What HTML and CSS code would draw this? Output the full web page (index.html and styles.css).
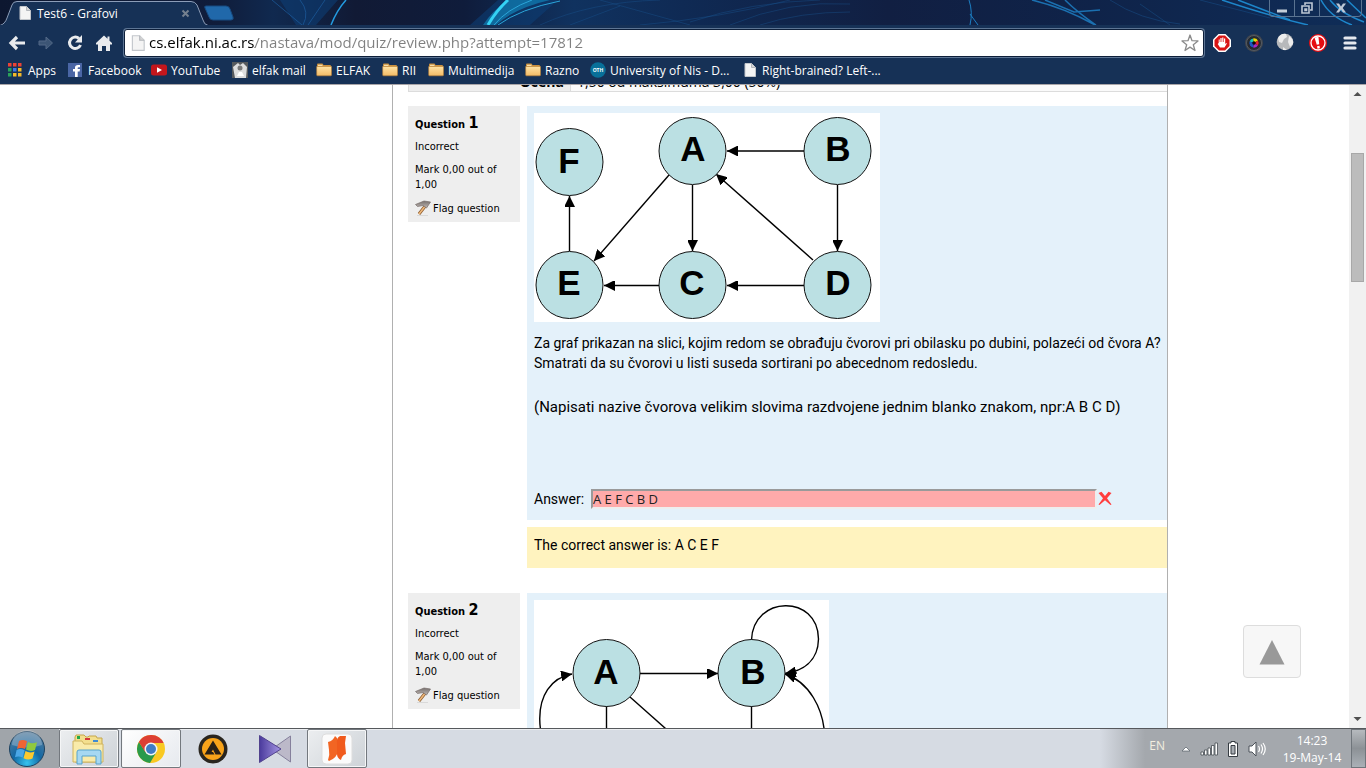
FILE: index.html
```html
<!DOCTYPE html>
<html lang="en">
<head>
<meta charset="utf-8">
<title>Test6 - Grafovi</title>
<link rel="stylesheet" href="styles.css">
</head>
<body>
<svg class="defs" width="0" height="0" aria-hidden="true">
  <defs>
    <marker id="arrow" viewBox="0 0 11 10" refX="11" refY="5" markerWidth="11" markerHeight="10" markerUnits="userSpaceOnUse" orient="auto"><path d="M0 -.5L11 5L0 10.500Z"/></marker>
    <linearGradient id="folderFill" x1="0" y1="0" x2="0" y2="1"><stop offset="0" stop-color="#ffe3a4"/><stop offset="1" stop-color="#f3bb66"/></linearGradient>
    <symbol id="folder" viewBox="0 0 16 16"><path d="M1 2.500q0-1 1-1h4.500l1 1.500H14q1 0 1 1V13H1z" fill="#c98f3d"/><path d="M.7 4.500h14.800V13q0 .8-.8.8H1.500Q.7 13.800 .7 13z" fill="url(#folderFill)" stroke="#b97f35" stroke-width=".6"/><path d="M2 3.300h4.500" stroke="#fff1c8"/></symbol>
    <symbol id="page" viewBox="0 0 16 16"><path d="M3 1.500h6.500l4 4V14.500H3z" fill="#f4f4f4" stroke="#c2c6cb"/><path d="M9.500 1.500v4h4" fill="#d5d5d5" stroke="#b3b7bc"/></symbol>
    <linearGradient id="flagHead" x1="0" y1="0" x2="0" y2="1"><stop offset="0" stop-color="#77706e"/><stop offset="1" stop-color="#c0b8b4"/></linearGradient>
    <symbol id="flag" viewBox="0 0 16 16"><path d="M2 15.500h11" stroke="#d9d9d9"/><path d="M11 5L4 14" stroke="#8b5a2b" stroke-width="3"/><path d="M11 5L4 14" stroke="#eeb87c" stroke-width="1.600"/><path d="M.5 4.500L9 1l6.500 1-4 6-3.500-2.500L2.500 6.500z" fill="url(#flagHead)" stroke="#776d6a" stroke-width=".7"/></symbol>
  </defs>
</svg>

<header class="browser">
  <div class="titlebar">
    <svg class="wallpaper" viewBox="0 0 1366 25" preserveAspectRatio="xMinYMin slice" aria-hidden="true">
      <defs><linearGradient id="sky" x1="0" x2="1"><stop offset="0" stop-color="#0d1730"/><stop offset=".16" stop-color="#101d3b"/><stop offset=".2" stop-color="#10294f"/><stop offset=".26" stop-color="#111a35"/><stop offset=".34" stop-color="#0f1c3b"/><stop offset=".42" stop-color="#10325f"/><stop offset=".5" stop-color="#0f2a54"/><stop offset=".65" stop-color="#111f42"/><stop offset=".8" stop-color="#0f2349"/><stop offset="1" stop-color="#0f2d58"/></linearGradient></defs>
      <rect width="1366" height="25" fill="url(#sky)"/>
      <path d="M470 25L498 0h60L530 25zM280 0l16 25h20L338 0z" fill="#0d4078" opacity=".55"/>
      <path d="M483 25Q492 11 508 0h42Q515 8 496 25z" fill="#1187bd" opacity=".65"/>
      <g fill="none">
        <path d="M488 25Q496 11 508 0" stroke="#35d2f5" stroke-width="3"/>
        <path d="M494 25Q507 9 532 0M498 25Q520 9 560 1" stroke="#2ba5d9"/>
        <path d="M331 25Q337 10 346 0" stroke="#239be0" stroke-width="1.500"/>
        <path d="M272 0L302 25M300 0Q310 12 303 25M325 0L308 25" stroke="#1d5d9e" opacity=".7"/>
        <path d="M540 25Q590 2 660 0M570 25L620 6M690 22Q750 2 820 0M730 25Q790 0 850 4M760 25Q800 12 850 12M640 25Q720 18 790 0M600 0L690 25" stroke="#1a5590" opacity=".4"/>
        <path d="M969 0Q973 12 970 25M970 14L978 25" stroke="#1c7fc4"/>
        <path d="M1032 0Q1065 8 1095 25M1065 0Q1077 12 1096 25M1045 0L1074 12L1100 10" stroke="#1b70b0" stroke-width="1.500"/>
        <path d="M1110 0Q1140 20 1180 24M1140 4L1170 25M1200 0L1270 18" stroke="#17508a" opacity=".5"/>
        <path d="M1222 0Q1270 16 1308 25M1238 0L1290 20M1321 0Q1330 17 1352 25M1330 0Q1340 13 1364 22M1347 0L1366 18" stroke="#1d86ca" stroke-width="1.500"/>
      </g>
    </svg>
    <div class="tab">
      <svg class="tab-shape" width="208" height="25" viewBox="0 0 208 25" aria-hidden="true"><path d="M0 25.500Q5 24 7 18L12 5Q13 1.500 17 1.500H191Q195 1.500 197 5L203 20Q204 24.500 208 25.500z" fill="#163156" stroke="#8c9db8"/></svg>
      <svg class="tab-icon" width="16" height="16" aria-hidden="true"><use href="#page"/></svg>
      <span class="tab-title">Test6 - Grafovi</span>
      <button class="tab-close" aria-label="Close tab"><svg width="9" height="9" viewBox="0 0 9 9"><path d="M1.500 1.500l6 6m0-6l-6 6" stroke="#74808f" stroke-width="2"/></svg></button>
    </div>
    <button class="new-tab" aria-label="New tab"><svg width="32" height="16" viewBox="0 0 32 16"><path d="M3 1h20q3 0 4 3l3 8q1 3-2 3H10q-3 0-4-3L2 3q-1-2 1-2z" fill="#2068aa" stroke="#174a80"/></svg></button>
    <div class="window-buttons">
      <button aria-label="Minimize"><svg width="12" height="12" viewBox="0 0 12 12"><path d="M1 7.500h10v3H1z" fill="#c5ced9"/></svg></button>
      <button aria-label="Restore"><svg width="12" height="12" viewBox="0 0 12 12"><path d="M4 3V1h7v7H9M1 4h7v7H1zM4 7h1.500v1.500H4z" fill="none" stroke="#bdc7d4" stroke-width="1.600"/></svg></button>
      <button aria-label="Close" class="close"><svg width="12" height="12" viewBox="0 0 12 12"><path d="M1 1.500h3l2 3 2-3h3L7.700 6l3.300 4.500H8L6 7.500l-2 3H1L4.300 6z" fill="#bdc8d6"/></svg></button>
    </div>
  </div>

  <div class="toolbar">
    <button aria-label="Back"><svg width="18" height="18" viewBox="0 0 18 18"><path d="M9 3L3 9l6 6M3 9h14" fill="none" stroke="#e9ebee" stroke-width="3.200"/></svg></button>
    <button aria-label="Forward"><svg width="18" height="18" viewBox="0 0 18 18"><path d="M9 3l6.500 6L9 15v-4H2V7h7z" fill="#3c5575" stroke="#526987"/></svg></button>
    <button aria-label="Reload"><svg width="18" height="18" viewBox="0 0 18 18"><path d="M13 4.500A5.700 5.700 0 1 0 14.500 11" fill="none" stroke="#e9ebee" stroke-width="3"/><path d="M16 1v7.500H9z" fill="#e9ebee"/></svg></button>
    <button aria-label="Home"><svg width="18" height="18" viewBox="0 0 18 18"><path d="M9 1.500l3.500 3.300V2.500h2v4.200L17 9v1.500h-2V17h-4v-5H7v5H3v-6.500H1V9z" fill="#e9ebee"/></svg></button>
    <div class="omnibox">
      <svg width="18" height="18" aria-hidden="true"><use href="#page"/></svg>
      <input class="url" aria-label="Address" value="cs.elfak.ni.ac.rs/nastava/mod/quiz/review.php?attempt=17812">
      <button aria-label="Bookmark this page"><svg width="18" height="18" viewBox="0 0 18 18"><path d="M9 1l2 5.700 6 .2-4.700 3.800L14 16.500 9 13.100 4 16.500l1.700-5.800L1 6.900l6-.2z" fill="#fff" stroke="#8b8b8b" stroke-width="1.300" stroke-linejoin="round"/></svg></button>
    </div>
    <div class="extensions">
      <button aria-label="AdBlock"><svg width="20" height="20" viewBox="0 0 20 20"><path d="M6.500 1h7L19 6.500v7L13.500 19h-7L1 13.500v-7z" fill="#fff"/><path d="M7 2.500h6L17.500 7v6L13 17.500H7L2.500 13V7z" fill="#d91414"/><path d="M6.700 10V6.500h1V9h.7V5h1.200v4h.6V4.500h1.200V9h.6V5.500h1.200V11l1-1 .7.500-2.400 4H8L5.700 11z" fill="#fff"/></svg></button>
      <button aria-label="Screen capture"><svg width="20" height="20" viewBox="0 0 20 20"><circle cx="10" cy="10" r="9" fill="#3f454d"/><circle cx="10" cy="10" r="7.500" fill="#252a31" stroke="#555b63"/><circle cx="10" cy="10" r="4.700" fill="#111"/><path d="M10 10L5.500 8.500A4.700 4.700 0 0 1 9 5.400z" fill="#16c6c0"/><path d="M10 10L9 5.400A4.700 4.700 0 0 1 14 7.500z" fill="#e8d80d"/><path d="M10 10l4-2.500a4.700 4.700 0 0 1 0 5z" fill="#e2222e"/><path d="M10 10l4 2.500a4.700 4.700 0 0 1-5 2z" fill="#a629c6"/><path d="M10 10l-4.500-1.500a4.700 4.700 0 0 0 3.500 6z" fill="#1b55c4"/><circle cx="10" cy="10" r="1.800" fill="#0a0a0a"/></svg></button>
      <button aria-label="Globe"><svg width="20" height="20" viewBox="0 0 20 20"><circle cx="9" cy="9" r="8.300" fill="#b7b9bb"/><path d="M2 5Q5 0 10 1l1 3-3 2-2 4-3-1zM13 3q5 3 4 8l-3 3-2-5zM7 14l4 3H7z" fill="#ececec"/></svg></button>
      <button aria-label="Alerts"><svg width="20" height="20" viewBox="0 0 20 20"><circle cx="10" cy="10" r="9" fill="#e60d12"/><circle cx="10" cy="10" r="7" fill="none" stroke="#fff" stroke-width="1.300"/><path d="M7.500 4h4L11 11.500H8.500zM8.500 13H11v2.500H8.500z" fill="#fff" transform="rotate(-10 10 10)"/></svg></button>
      <button aria-label="Menu"><svg width="20" height="20" viewBox="0 0 20 20"><path d="M5 5h10M5 10h10M5 15h10" stroke="#e6e9ee" stroke-width="3.200" stroke-linecap="round"/></svg></button>
    </div>
  </div>

  <nav class="bookmarks" aria-label="Bookmarks">
    <a href="#"><svg width="16" height="16" viewBox="0 0 16 16"><path d="M0 1h3.500v3.500H0zM5 1h3.500v3.500H5zM10 1h3.500v3.500H10z" fill="#ea4335"/><path d="M0 6h3.500v3.500H0zM0 11h3.500v3.500H0z" fill="#2aa35a"/><path d="M5 6h3.500v3.500H5z" fill="#3b78e7"/><path d="M10 6h3.500v3.500H10zM5 11h3.500v3.500H5zM10 11h3.500v3.500H10z" fill="#f4b928"/></svg><span>Apps</span></a>
    <a href="#"><svg width="16" height="16" viewBox="0 0 16 16"><path d="M0 1h14v14H0z" fill="#4a66a5"/><path d="M7 15V9.500H5V7h2V5.500Q7 3 10 3h2v2.300h-1.500q-.8 0-.8.8V7H12l-.4 2.500H9.700V15z" fill="#fff"/></svg><span>Facebook</span></a>
    <a href="#"><svg width="16" height="16" viewBox="0 0 16 16"><rect y="2.500" width="16" height="11" rx="2.500" fill="#c4161c"/><path d="M6 5.300l5 2.700-5 2.700z" fill="#fff"/></svg><span>YouTube</span></a>
    <a href="#"><svg width="16" height="16" viewBox="0 0 16 16"><path d="M0 0h16v16H0z" fill="#56595c"/><path d="M1 5l5-4 2 2 3-2 4 4-1 11H3z" fill="#ddd"/><circle cx="8" cy="6" r="2.500" fill="#777"/><path d="M5 14l2-4h3l2 4z" fill="#fff"/></svg><span>elfak mail</span></a>
    <a href="#"><svg width="16" height="16"><use href="#folder"/></svg><span>ELFAK</span></a>
    <a href="#"><svg width="16" height="16"><use href="#folder"/></svg><span>RII</span></a>
    <a href="#"><svg width="16" height="16"><use href="#folder"/></svg><span>Multimedija</span></a>
    <a href="#"><svg width="16" height="16"><use href="#folder"/></svg><span>Razno</span></a>
    <a href="#"><svg width="16" height="16" viewBox="0 0 16 16"><circle cx="8" cy="8" r="7.800" fill="#087099"/><text x="8" y="10" class="oth">OTH</text></svg><span>University of Nis - D...</span></a>
    <a href="#"><svg width="16" height="16"><use href="#page"/></svg><span>Right-brained? Left-...</span></a>
  </nav>
</header>

<div class="viewport">
  <main class="page">
    <div class="sheet">
      <table class="summary">
        <tr><th scope="row">Ocena</th><td>1,50 od maksimuma 3,00 (50%)</td></tr>
      </table>

      <section class="question">
        <aside class="info">
          <h2>Question <b>1</b></h2>
          <p>Incorrect</p>
          <p>Mark 0,00 out of 1,00</p>
          <a class="flag" href="#"><svg width="16" height="16"><use href="#flag"/></svg>Flag question</a>
        </aside>
        <div class="body">
          <div class="formulation">
            <svg class="graph" width="346" height="209" viewBox="0 0 346 209" role="img" aria-label="Directed graph">
              <g class="edges">
                <path d="M270 38H193"/><path d="M303.500 72V138"/><path d="M158.500 72V138"/><path d="M135 62L60 148"/><path d="M279 147L182 61"/><path d="M35.500 138V83"/><path d="M125 172.500H70"/><path d="M270 172.500H193"/>
              </g>
              <g class="nodes">
                <circle cx="35.500" cy="49" r="33.500"/><circle cx="158.500" cy="38" r="33.500"/><circle cx="303.500" cy="38" r="33.500"/><circle cx="35.500" cy="172" r="33.500"/><circle cx="158.500" cy="172" r="33.500"/><circle cx="303.500" cy="172" r="33.500"/>
              </g>
              <g class="letters">
                <text x="35" y="60">F</text><text x="159" y="48">A</text><text x="304" y="48">B</text><text x="35" y="182">E</text><text x="158" y="182">C</text><text x="304" y="182">D</text>
              </g>
            </svg>
            <p>Za graf prikazan na slici, kojim redom se obrađuju čvorovi pri obilasku po dubini, polazeći od čvora A? Smatrati da su čvorovi u listi suseda sortirani po abecednom redosledu.</p>
            <p class="hint">(Napisati nazive čvorova velikim slovima razdvojene jednim blanko znakom, npr:A B C D)</p>
            <div class="answer">
              <label for="answer1">Answer:</label>
              <input id="answer1" value="A E F C B D" readonly>
              <svg width="14" height="16" viewBox="0 0 14 16" role="img" aria-label="Incorrect"><path d="M.5 2L3.500 .8 7 5 10.500 .8 13.500 2 9 7.300 13.500 13.500 12.500 14 7 9.300 1.500 14 .5 13.500 5 7.300z" fill="#ff3e3e"/></svg>
            </div>
          </div>
          <div class="outcome">The correct answer is: A C E F</div>
        </div>
      </section>

      <section class="question">
        <aside class="info">
          <h2>Question <b>2</b></h2>
          <p>Incorrect</p>
          <p>Mark 0,00 out of 1,00</p>
          <a class="flag" href="#"><svg width="16" height="16"><use href="#flag"/></svg>Flag question</a>
        </aside>
        <div class="body">
          <div class="formulation">
            <svg class="graph" width="295" height="209" viewBox="0 0 295 209" role="img" aria-label="Directed graph">
              <g class="edges">
                <path d="M106 73.500H184"/><path d="M217.500 40C219 -5 284 -6 284.500 39C284 62 268 71 251 73.500"/><path d="M72.500 106V190"/><path d="M217.500 106V190"/><path d="M96 97L193 183"/><path d="M38 190C-4 148 -6 82 38 74"/><path d="M256 190C306 182 300 90 251 74"/>
              </g>
              <g class="nodes"><circle cx="72.500" cy="73" r="33.500"/><circle cx="217.500" cy="73" r="33.500"/></g>
              <g class="letters"><text x="72" y="84">A</text><text x="219" y="84">B</text></g>
            </svg>
          </div>
        </div>
      </section>
    </div>
    <button class="to-top" aria-label="Back to top"><svg width="26" height="26" viewBox="0 0 26 26"><path d="M13 1L25.500 25.500H.5z" fill="#999"/></svg></button>
  </main>
  <div class="scrollbar" aria-hidden="true">
    <svg width="17" height="17" viewBox="0 0 17 17"><path d="M4.500 11L8.500 7l4 4z" fill="#505050"/></svg>
    <div class="track"><div class="thumb"></div></div>
    <svg width="17" height="17" viewBox="0 0 17 17"><path d="M4.500 6L8.500 10l4-4z" fill="#505050"/></svg>
  </div>
</div>

<footer class="taskbar">
  <button class="start" aria-label="Start"><svg width="38" height="38" viewBox="0 0 38 38">
    <defs><radialGradient id="orb" cx=".5" cy=".9" r=".9"><stop offset="0" stop-color="#35c3ee"/><stop offset=".45" stop-color="#1268a4"/><stop offset="1" stop-color="#5b7f9d"/></radialGradient></defs>
    <circle cx="19" cy="19" r="17.500" fill="url(#orb)" stroke="#1d4260"/><path d="M4 15A15 15 0 0 1 34 15Q19 20 4 15z" fill="#fff" opacity=".25"/>
    <path d="M11 11q4-2 8 .3l-2 7.700q-4-2-8 0z" fill="#ee6434"/><path d="M20 12q4 2.500 9 .2l-2 7.800q-4.500 2-9-.5z" fill="#8fc93f"/><path d="M8.600 20q4-2 8 .3l-2 7.200q-4-2-7.600-.3z" fill="#4ba7e6"/><path d="M17.500 21q4 2.500 9 .5l-2 7q-4.500 2-9-.3z" fill="#fbc92e"/></svg></button>
  <button class="task open" aria-label="File Explorer"><svg width="36" height="34" viewBox="0 0 36 34">
    <path d="M4 5l1-2h8l2 2h2l1-1h7l1 2h5v24H4z" fill="#f3df8e" stroke="#c6a74b"/><path d="M6 4h3v3H6z" fill="#22a84a"/><path d="M14 6h5v2h-5z" fill="#d3393a"/><path d="M22 8h5v2h-5z" fill="#3f8bd2"/><path d="M2 9h9l2 3h19v18H2z" fill="#f9ebaa" stroke="#d0b45e"/><path d="M6 20q0-2 2-2h20q2 0 2 2v12h-5v-8H11v8H6z" fill="#a6d8f2" stroke="#57a3cc"/></svg></button>
  <button class="task open active" aria-label="Google Chrome"><svg width="30" height="30" viewBox="0 0 30 30">
    <circle cx="15" cy="15" r="14" fill="#f9c922"/><path d="M2.900 8A14 14 0 0 0 14 29L20.500 18 15 15 9.500 18z" fill="#2a9a4b"/><path d="M2.900 8L9.500 18.500 15 9h12.600A14 14 0 0 0 2.900 8z" fill="#dd3f33"/><circle cx="15" cy="15" r="6.500" fill="#f4f4f4"/><circle cx="15" cy="15" r="5" fill="#3f7cc4"/></svg></button>
  <button class="task" aria-label="AIMP"><svg width="30" height="30" viewBox="0 0 30 30">
    <circle cx="15" cy="15" r="14.500" fill="#29251f"/><circle cx="15" cy="15" r="11" fill="#f8a31a"/><path d="M15 6.500l8.500 14h-6l-2.500-5-1.500 2.500h1.500l1.500 2.500h-10z" fill="#2a2117"/></svg></button>
  <button class="task" aria-label="KMPlayer"><svg width="34" height="30" viewBox="0 0 34 30">
    <defs><linearGradient id="kmp" x1="0" x2="1"><stop offset="0" stop-color="#4a3a9c"/><stop offset="1" stop-color="#a596e4"/></linearGradient></defs>
    <path d="M32.500 2v26L14 15z" fill="#bcb9c9" stroke="#85809c"/><path d="M1.500 1.500L23 15 1.500 28.500z" fill="url(#kmp)" stroke="#51428e"/></svg></button>
  <button class="task open" aria-label="Nitro"><svg width="32" height="32" viewBox="0 0 32 32">
    <rect x="1" y="1" width="30" height="30" rx="4" fill="#fbfbfb" stroke="#ddd"/><path d="M7 9q5-1 7-6 3 2 3 5v10q-1 7-9 10l-1-1q2-5 1-10z" fill="#f26523"/><path d="M16 11q-1-6 3-8h6l-1 7 1 11q-4 1-5 6-4-2-4-6z" fill="#f05a1c"/></svg></button>
  <div class="tray">
    <span class="lang">EN</span>
    <button aria-label="Show hidden icons"><svg width="10" height="8" viewBox="0 0 10 8"><path d="M1 6l4-4 4 4z" fill="#fff" stroke="#555d66" stroke-width=".7"/></svg></button>
    <button aria-label="Network"><svg width="18" height="16" viewBox="0 0 18 16"><path d="M1 11h2.500v3H1zM4.500 9H7v5H4.500zM8 7h2.500v7H8zM11.500 4.500H14V14h-2.500zM15 2h2.500v12H15z" fill="#fff" stroke="#454b52" stroke-width=".8"/></svg></button>
    <button aria-label="Battery"><svg width="12" height="16" viewBox="0 0 12 16"><path d="M4 .5h4V2h2.500v13.500h-9V2H4z" fill="#fff" stroke="#363c42"/><path d="M4 4.500h4v8.500H4z" fill="#a7acb2" stroke="#343a40"/></svg></button>
    <button aria-label="Volume"><svg width="18" height="16" viewBox="0 0 18 16"><path d="M1 5h3l4-4v14l-4-4H1z" fill="#fff" stroke="#4b5158"/><path d="M10.500 5q2 3 0 6M13 3.500q3 4.500 0 9M15 2q4.500 6 0 12" fill="none" stroke="#fff" stroke-width="1.200"/></svg></button>
    <time class="clock">14:23<br>19-May-14</time>
    <button class="desktop" aria-label="Show desktop"></button>
  </div>
</footer>
</body>
</html>
```
FILE: styles.css
```css
* { box-sizing: border-box; }
html, body { height: 100%; margin: 0; }
body {
  display: flex;
  flex-direction: column;
  overflow: hidden;
  background: #fff;
  color: #000;
  font-family: "Open Sans", "Noto Sans", sans-serif;
  font-size: 12px;
}
button {
  display: inline-flex;
  align-items: center;
  justify-content: center;
  padding: 0;
  border: 0;
  background: none;
}
svg { display: block; flex: none; }
a { color: inherit; text-decoration: none; }
.defs { position: absolute; }

/* browser frame */
.browser { flex: none; background: #163156; border-bottom: 1px solid #a9a5a8; }
.titlebar { position: relative; display: flex; height: 25px; background: #0d2146; }
.wallpaper { position: absolute; inset: 0; width: 100%; height: 100%; }
.tab {
  position: relative;
  display: flex;
  align-items: center;
  gap: 4px;
  width: 208px;
  height: 25px;
  padding: 1px 18px 0 17px;
  color: #fff;
}
.tab-shape { position: absolute; inset: 0; }
.tab-icon, .tab-title, .tab-close { position: relative; }
.tab-title { flex: 1; white-space: nowrap; }
.new-tab { position: relative; width: 32px; height: 16px; margin: 5px 0 0 -5px; }
.window-buttons {
  position: relative;
  display: flex;
  height: 17px;
  margin-left: auto;
  margin-right: 4px;
  border: solid #5a7391;
  border-width: 0 1px 1px;
  border-radius: 0 0 4px 4px;
}
.window-buttons button { width: 25px; border-right: 1px solid #5a7391; }
.window-buttons .close { width: 41px; border: 0; }

.toolbar { display: flex; align-items: center; height: 35px; padding: 0 6px 0 8px; }
.toolbar > button { width: 29px; height: 24px; padding-right: 11px; }
.omnibox {
  display: flex;
  flex: 1;
  align-items: center;
  gap: 2px;
  height: 28px;
  margin-right: 8px;
  padding: 0 4px;
  background: #fff;
  border: 1px solid #0d1f3a;
  border-radius: 3px;
  box-shadow: 0 0 0 1px #5d7594;
}
.url {
  flex: 1;
  min-width: 0;
  height: 24px;
  padding: 0 0 2px;
  border: 0;
  outline: 0;
  font: 15px "Open Sans", sans-serif;
  color: transparent;
  background: linear-gradient(to right, #000 106px, #808080 106px);
  -webkit-background-clip: text;
  background-clip: text;
}
.extensions { display: flex; gap: 12px; }

.bookmarks {
  display: grid;
  grid-template-columns: 60px 83px 81px 84px 66px 46px 97px 65px 152px auto;
  align-items: center;
  justify-content: start;
  height: 24px;
  padding: 0 8px 4px;
  color: #fff;
}
.bookmarks a { display: flex; align-items: center; gap: 4px; white-space: nowrap; }
.oth { font: bold 5px "Open Sans", sans-serif; fill: #fff; text-anchor: middle; }

/* page */
.viewport { display: flex; flex: 1; min-height: 0; overflow: hidden; }
.page {
  position: relative;
  display: grid;
  flex: 1;
  grid-template-columns: 392px minmax(0, 1fr) 181px;
  overflow: hidden;
}
.sheet {
  grid-column: 2;
  padding-left: 15px;
  border: solid #b0b0b0;
  border-width: 0 1px;
}
.summary {
  width: 100%;
  margin-top: -19px;
  margin-bottom: 14px;
  border-collapse: collapse;
  font-size: 14px;
  line-height: 18px;
}
.summary th, .summary td { padding: 6px 6px 0; border: 1px solid #dcdcdc; }
.summary th { width: 162px; background: #eee; text-align: right; }
.summary td { background: #fafafa; border-right: 0; }

.question { display: flex; align-items: flex-start; gap: 7px; margin-bottom: 25px; }
.info {
  flex: none;
  width: 112px;
  padding: 8px 7px 6px;
  background: #eee;
  font: 11px/15px "DejaVu Sans Condensed", "DejaVu Sans", sans-serif;
}
.info h2 { margin: 0 0 5px; font-size: 11px; line-height: 18px; }
.info b { font-size: 16px; }
.info p { margin: 0 0 8px; }
.flag { display: flex; align-items: center; gap: 2px; white-space: nowrap; }
.body { flex: 1; min-width: 0; font: 14px/20px Roboto, sans-serif; }
.formulation { padding: 7px 0 11px 7px; background: #e4f1fa; }
.formulation p { margin: 11px 0 0; }
.formulation .hint { margin-top: 24px; font-size: 15px; }
.graph { background: #fff; }
.edges { fill: none; stroke: #000; stroke-width: 1.4; }
.edges path { marker-end: url(#arrow); }
.nodes { fill: #bbe0e3; stroke: #111; }
.letters { font: bold 35px "Liberation Sans", sans-serif; text-anchor: middle; }
.answer { display: flex; align-items: center; margin-top: 72px; }
.answer label { width: 57px; }
.answer input {
  width: 506px;
  height: 20px;
  padding: 0;
  border: 2px inset #eee;
  background: #ffaaaa;
  font: 13px "Open Sans", sans-serif;
  color: #222;
}
.answer svg { margin-left: 1px; }
.outcome { min-height: 41px; margin-top: 7px; padding: 8px 7px; background: #fff3bf; }
.to-top {
  position: absolute;
  right: 48px;
  bottom: 50px;
  width: 58px;
  height: 53px;
  border: 1px solid #ddd;
  border-radius: 4px;
  background: #f7f7f7;
}
.scrollbar { display: flex; flex: none; flex-direction: column; width: 17px; background: #f1f1f1; }
.track { flex: 1; padding: 51px 2px 0; }
.thumb { height: 129px; border: 1px solid #a8a8a8; background: #bcbcbc; }

/* taskbar */
.taskbar {
  display: flex;
  flex: none;
  height: 40px;
  border-top: 1px solid #55585c;
  background: #d6dbe3;
  box-shadow: inset 0 1px #eceef1;
}
.start { width: 59px; padding-right: 6px; background: #a0a5aa; }
.task { width: 60px; margin-right: 2px; }
.open {
  border: 1px solid #73787e;
  border-radius: 2px;
  background: linear-gradient(135deg, #eceef0, #cdd2d7);
  box-shadow: inset 0 0 0 1px #f5f6f7;
}
.active { background: linear-gradient(135deg, #fff, #e6e9ee); }
.tray {
  display: flex;
  align-items: center;
  gap: 9px;
  margin-left: auto;
  padding-left: 49px;
  background: linear-gradient(to right, #d6dbe3, #a4a8ad 45px);
  color: #fff;
}
.lang { margin: 0 7px 6px 0; color: #f2eee0; }
.clock { width: 60px; margin-left: 7px; line-height: 17px; text-align: center; white-space: nowrap; }
.desktop {
  align-self: stretch;
  width: 15px;
  border: 1px solid #6f757b;
  background: linear-gradient(#b6babe, #8c9196 50%, #aab0b6);
}
```
